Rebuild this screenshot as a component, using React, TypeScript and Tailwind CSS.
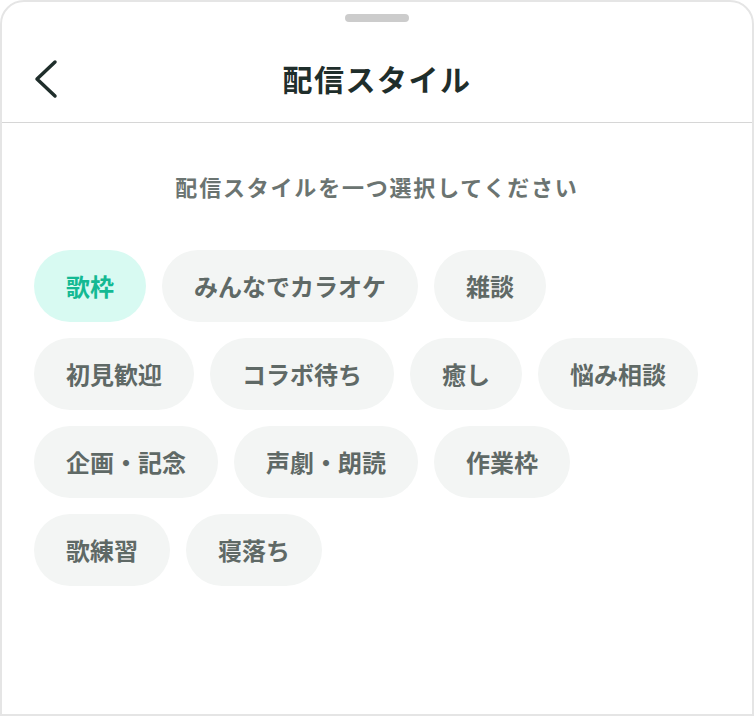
import React, { useState } from 'react';

const styles = [
  '歌枠',
  'みんなでカラオケ',
  '雑談',
  '初見歓迎',
  'コラボ待ち',
  '癒し',
  '悩み相談',
  '企画・記念',
  '声劇・朗読',
  '作業枠',
  '歌練習',
  '寝落ち'
];

const App: React.FC = () => {
  const [selected, setSelected] = useState('歌枠');

  return (
    <div
      className="w-[754px] h-[716px] bg-white border-2 border-[#e5e5e5] rounded-t-[24px] overflow-hidden"
      style={{ fontFamily: '"Noto Sans CJK JP", "Noto Sans", sans-serif' }}
    >
      <div className="pt-3 flex justify-center">
        <div className="h-2 w-16 rounded-full bg-[#cccccc]" />
      </div>

      <header className="relative h-[101px] pt-3 flex items-center justify-center border-b border-[#d6d6d6]">
        <button className="absolute left-[24px] top-[34px] h-[46px] w-[40px] flex items-center justify-center" aria-label="戻る">
          <svg width="26" height="40" viewBox="0 0 26 40" fill="none">
            <path d="M22 3 L4 20 L22 37" stroke="#1f2e2b" strokeWidth="3.5" strokeLinecap="round" strokeLinejoin="round" />
          </svg>
        </button>
        <h1 className="text-[30px] leading-[40px] font-bold tracking-[1.5px] text-[#1f2e2b]">配信スタイル</h1>
      </header>

      <p className="mt-[47px] text-center text-[22px] leading-[32px] font-bold tracking-[1.8px] text-[#6b7471]">
        配信スタイルを一つ選択してください
      </p>

      <div className="mt-[48px] px-8 flex flex-wrap gap-4">
        {styles.map((s) => {
          const active = s === selected;
          return (
            <button
              key={s}
              onClick={() => setSelected(s)}
              className={`h-[72px] px-8 rounded-full text-[24px] leading-none font-bold ${
                active ? 'bg-[#d8faf2] text-[#14b993]' : 'bg-[#f3f5f4] text-[#5f6966]'
              }`}
            >
              {s}
            </button>
          );
        })}
      </div>
    </div>
  );
};

export default App;
